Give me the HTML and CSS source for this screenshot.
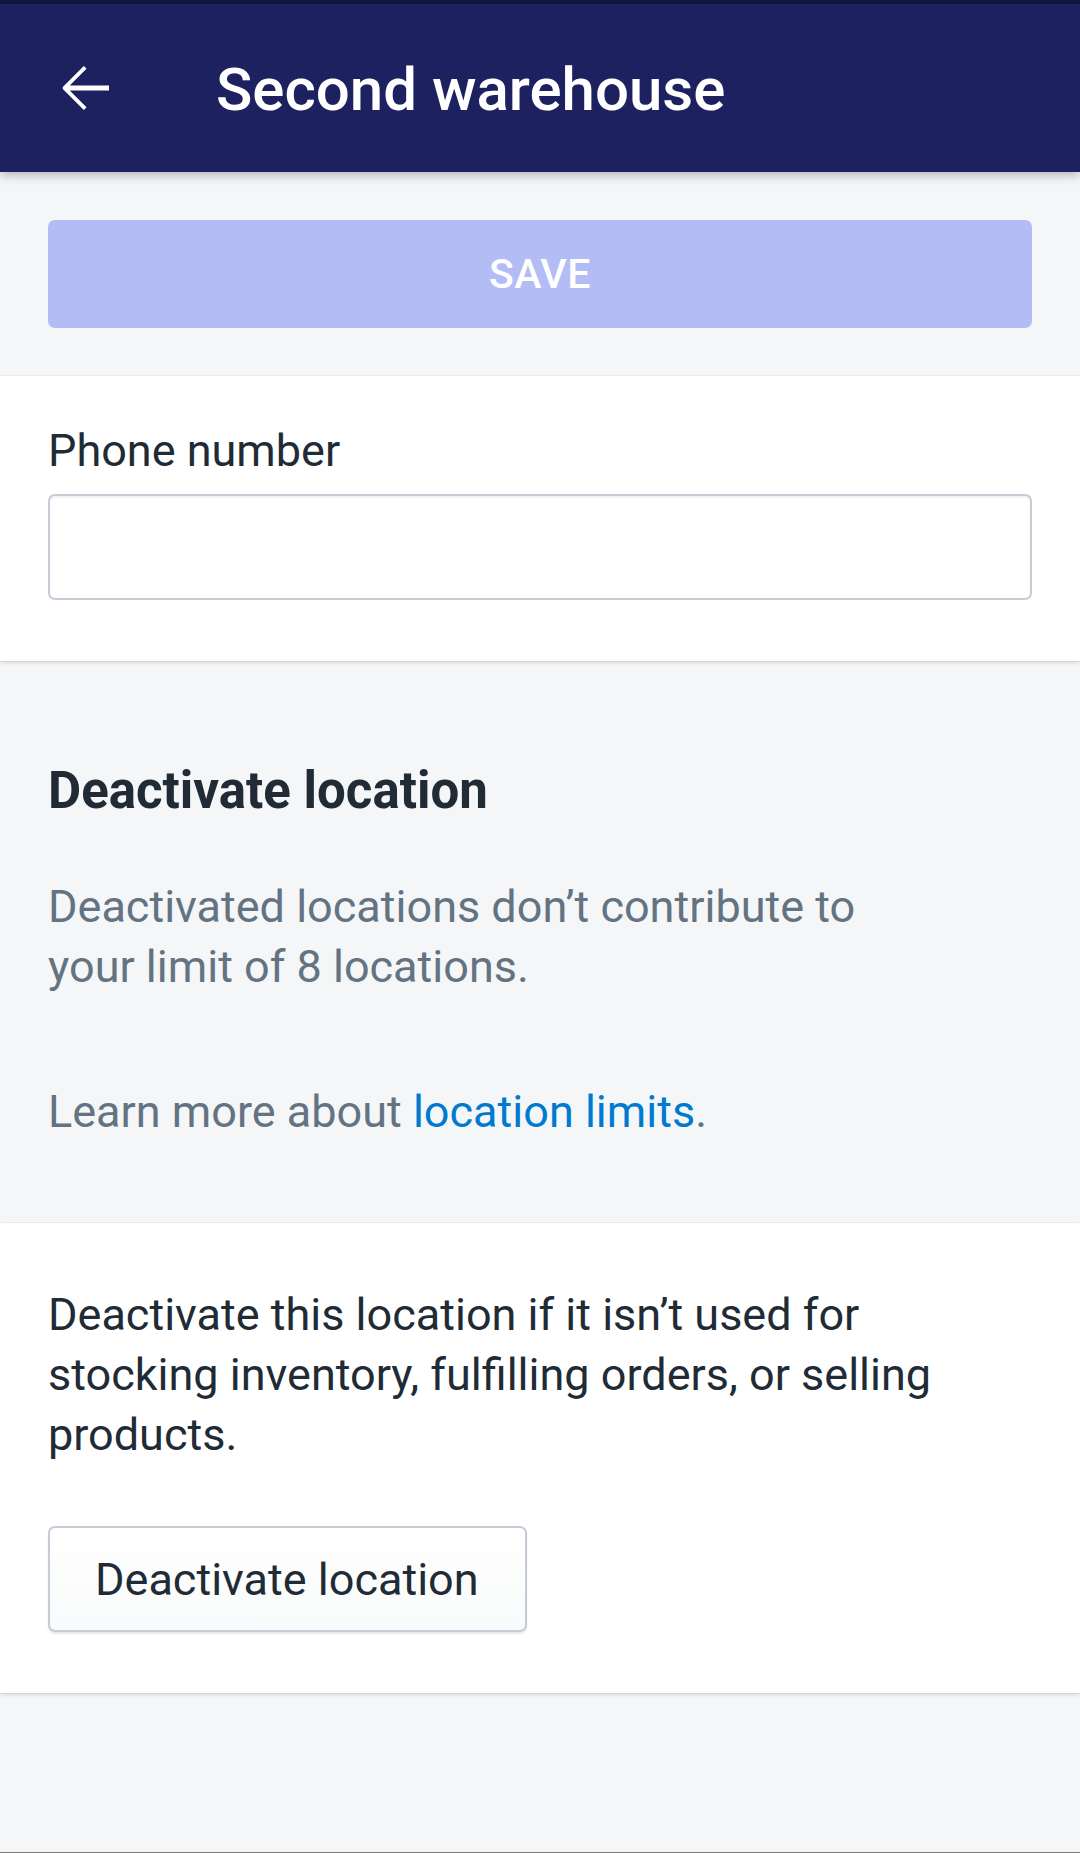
FILE: index.html
```html
<!DOCTYPE html>
<html lang="en">
<head>
<meta charset="utf-8">
<title>Second warehouse</title>
<link rel="stylesheet" href="styles.css">
</head>
<body>
<div class="page">
  <div class="status"></div>
  <header class="appbar">
    <svg class="back" viewBox="0 0 24 24" width="72" height="72" aria-hidden="true">
      <path d="M20 11.2H6.9l5.6-5.6-0.9-0.9L4.6 11.7v0.6l7 7 0.9-0.9-5.6-5.6H20z" fill="#ffffff"/>
    </svg>
    <h1 class="title">Second warehouse</h1>
  </header>
  <main class="content">
    <div class="actions">
      <button class="save" type="button">SAVE</button>
    </div>
    <section class="card phone">
      <label class="label" for="phone">Phone number</label>
      <input class="input" id="phone" type="tel">
    </section>
    <section class="info">
      <h2 class="heading">Deactivate location</h2>
      <p class="desc">Deactivated locations don’t contribute to your limit of 8 locations.</p>
      <p class="learn">Learn more about <a class="link" href="#">location limits</a>.</p>
    </section>
    <section class="card deactivate">
      <p class="body">Deactivate this location if it isn’t used for stocking inventory, fulfilling orders, or selling products.</p>
      <button class="secondary" type="button">Deactivate location</button>
    </section>
  </main>
  <div class="navline"></div>
</div>
</body>
</html>
```

FILE: styles.css
```css
html, body {
  margin: 0;
  padding: 0;
}
body {
  background: #f4f6f8;
  font-family: Roboto, "Liberation Sans", Arial, sans-serif;
  color: #212b36;
}
.page {
  width: 1080px;
  min-height: 1853px;
  display: flex;
  flex-direction: column;
}
.status {
  height: 4px;
  background: #12163f;
}
.appbar {
  height: 168px;
  background: #1e2160;
  display: flex;
  align-items: center;
  padding-left: 49px;
  box-shadow: 0 3px 10px rgba(0, 0, 0, 0.28);
  position: relative;
  z-index: 2;
}
.back {
  display: block;
  flex: none;
}
.title {
  margin: 0 0 0 95px;
  font-size: 60px;
  font-weight: 500;
  color: #ffffff;
  line-height: 1;
  position: relative;
  top: 2px;
}
.content {
  display: flex;
  flex-direction: column;
  flex: 1;
}
.actions {
  padding: 48px 48px;
}
.save {
  display: block;
  width: 100%;
  height: 108px;
  border: none;
  border-radius: 7px;
  background: #b3bcf5;
  color: #ffffff;
  font-family: inherit;
  font-size: 41px;
  font-weight: 500;
  letter-spacing: 0.5px;
}
.card {
  background: #ffffff;
  box-shadow: 0 0 0 1px rgba(63, 63, 68, 0.05), 0 2px 3px rgba(63, 63, 68, 0.15);
  position: relative;
  z-index: 1;
}
.phone {
  padding: 45px 48px 61px;
}
.label {
  display: block;
  font-size: 45px;
  line-height: 60px;
  color: #212b36;
}
.input {
  display: block;
  box-sizing: border-box;
  width: 100%;
  height: 106px;
  margin-top: 13px;
  border: 2px solid #c4cdd5;
  border-radius: 7px;
  background: #ffffff;
  box-shadow: inset 0 2px 1px rgba(99, 115, 129, 0.08);
}
.info {
  padding: 100px 48px 81px;
}
.heading {
  margin: 0;
  font-size: 51px;
  font-weight: 700;
  line-height: 60px;
  color: #212b36;
}
.desc {
  margin: 56px 0 0;
  max-width: 880px;
  font-size: 45px;
  line-height: 60px;
  color: #637381;
}
.learn {
  margin: 85px 0 0;
  font-size: 45px;
  line-height: 60px;
  color: #637381;
}
.link {
  color: #007ace;
  text-decoration: none;
}
.deactivate {
  padding: 62px 48px 61px;
}
.body {
  margin: 0;
  font-size: 45px;
  line-height: 60px;
  color: #212b36;
}
.secondary {
  display: block;
  box-sizing: border-box;
  height: 106px;
  margin-top: 61px;
  padding: 0 46px 0 45px;
  border: 2px solid #c4cdd5;
  border-radius: 7px;
  background: linear-gradient(#ffffff, #f9fafb);
  box-shadow: 0 2px 2px rgba(22, 29, 37, 0.1);
  font-family: inherit;
  font-size: 45px;
  color: #212b36;
}
.navline {
  margin-top: auto;
  height: 1px;
  background: #7a7a7a;
}
```
